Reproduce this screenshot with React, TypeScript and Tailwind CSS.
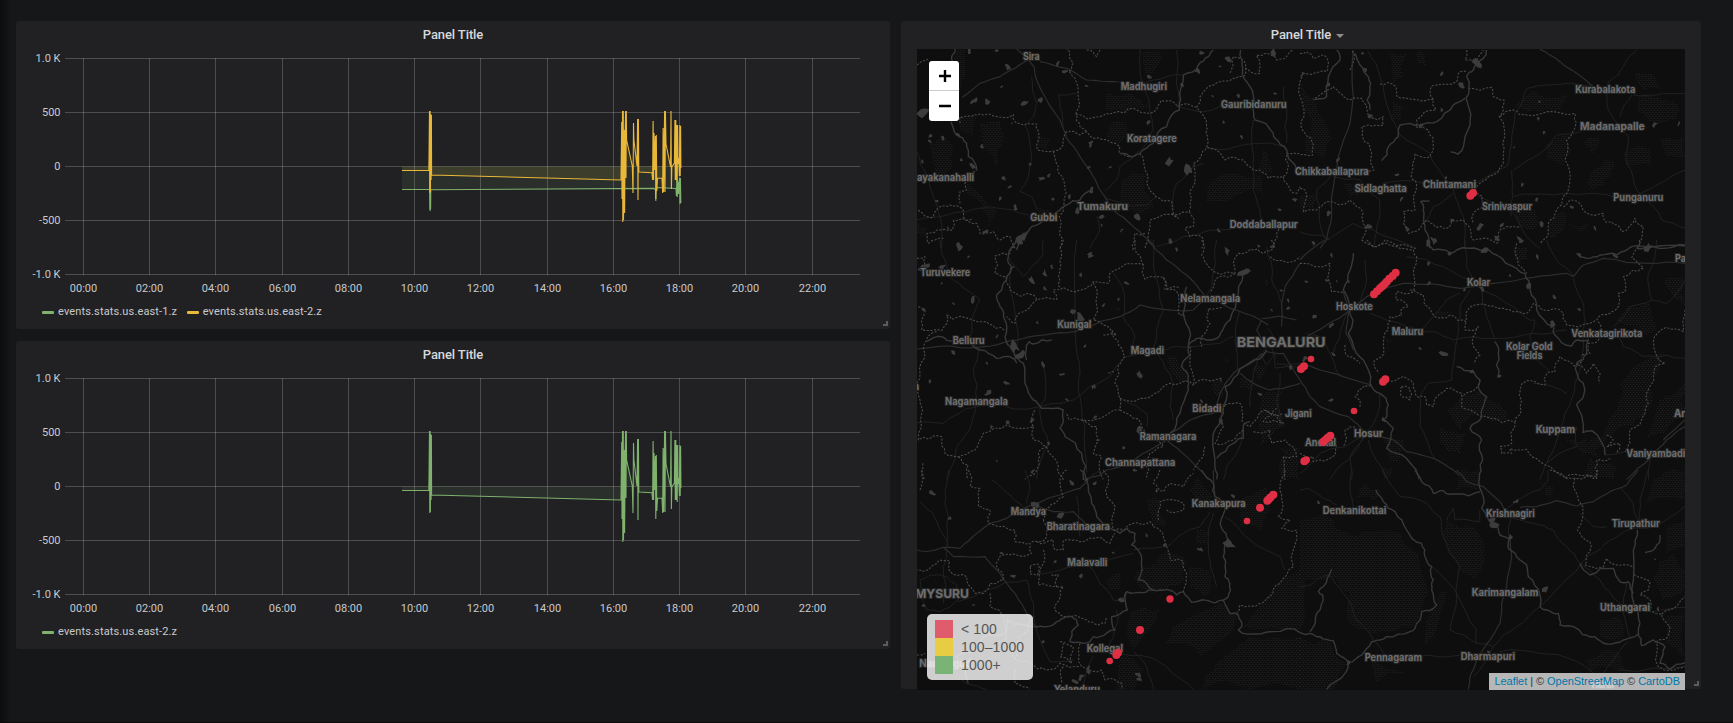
import React from "react";

/* ---------- map geometry ---------- */

type Tile = {
  dx: number;
  dy: number;
  border: string[];
  water: string[];
  major: string[];
  minor: string[];
  forest: string[];
  lakes: number[];
};

const tiles: Tile[] = [
  {
    dx: -17,
    dy: -39,
    border: [
      "51,165 60,158 75,152 84,148",
      "180,340 178,322 208,318 240,312 280,318 340,314 345,335 372,345 410,342 415,365 412,420 460,424 490,405 492,380 500,365 540,375 560,365 580,385 630,395 660,410 658,430 700,440",
      "508,185 525,205 528,310 540,350 560,365",
      "528,312 600,320 640,308 700,295 750,310 770,298 782,272 810,272 830,290 890,292 900,305 912,320 918,370 922,405 905,430 880,460 885,490 872,540 872,590 868,605 840,612 820,610 815,575 768,560 740,520 728,440 720,430",
      "890,292 900,260 920,235 960,215 1000,205 1032,198 1030,150 1000,140 990,190",
      "508,185 520,160 510,130 500,117",
      "560,120 590,140 600,120",
      "1035,175 1060,190 1080,190 1078,150 1070,135 1100,130 1130,150 1160,140 1180,120",
      "460,424 475,470 490,510 495,560 490,590 478,620 490,690 480,715",
      "922,412 950,420 975,450 1030,450 1060,480 1095,490 1105,505 1150,500 1165,470 1160,430 1200,430",
      "1150,500 1160,520 1190,550 1200,530",
      "55,600 75,618 100,620 120,590 150,585 185,595 190,620 230,640 240,670 280,665 300,690 330,680 345,715",
      "215,460 230,480 195,520 200,540 180,545 180,580",
      "215,628 160,632 158,660 110,660 80,672 85,700 130,685",
      "815,610 835,625 750,630 745,670 735,715",
      "868,605 880,650 855,655 870,680 905,680 905,715",
      "1150,640 1130,670 1120,715",
      "700,720 705,670 735,670",
    ],
    water: [
      "165,117 155,140 158,155",
      "153,335 170,375 200,400 205,440 230,480",
      "575,540 540,570 500,585 480,600 430,630 395,650 370,670 350,720",
      "940,120 925,140 895,165 850,195 842,270 838,300 800,350 760,400 720,430 700,440 680,432 660,430",
      "1022,120 1028,180 1050,230 1060,290 1065,330 1120,370 1125,385 1160,420 1185,465 1200,490",
    ],
    major: [
      "385,150 402,170 408,205 440,270 480,330 500,385 540,440 580,500 600,540 640,600 700,650 765,710",
      "187,262 240,220 300,200 345,175 385,150 350,117",
      "420,155 500,175 560,210 650,215",
    ],
    minor: [
      "650,215 720,225 800,200 845,195",
      "530,250 475,255 480,290 490,350",
      "720,117 720,180 735,240 750,300 760,360 740,400 700,440 660,470 650,510 615,545",
      "395,200 410,280 400,320 375,345 395,440 385,500 360,545 395,560 410,600",
      "51,425 80,500 100,560 120,620 125,715",
      "51,630 130,618 200,605 270,590 340,600 385,615",
      "615,565 700,590 740,585 770,560",
      "590,620 600,660 570,715",
      "770,710 850,680 930,660 1000,655",
      "830,120 830,200 835,290",
      "838,290 910,305 960,290 1080,290",
      "910,460 870,480 830,520 820,600",
      "1060,330 1055,400 1060,480 1060,540 1080,600 1090,640",
      "922,415 1000,412 1150,410",
      "1160,400 1160,300 1150,230",
    ],
    forest: [
      "170,120 195,120 195,200 180,240 160,260 155,170",
      "240,340 300,330 310,390 285,470 250,410",
      "90,400 130,380 160,470 130,500 100,460",
      "620,250 700,250 745,290 680,310 615,300",
      "725,125 780,125 760,190 735,190",
      "630,340 680,340 660,400 620,380",
      "920,540 980,490 1080,495 1085,550 1000,560 920,575",
      "665,510 740,490 760,590 720,610 660,570",
      "410,375 450,385 440,420 415,415",
      "1090,420 1110,460 1120,490 1075,480",
      "200,510 260,580 290,600 270,650 250,600 200,550",
      "180,320 230,320 220,380 180,360",
      "51,640 80,650 75,680 51,670",
      "410,590 450,600 430,640",
    ],
    lakes: [
      208, 125, 6, 290, 122, 5, 325, 172, 9, 472, 163, 7, 495, 185, 6, 560, 228, 4, 222, 272, 9, 260, 275, 10, 375, 278, 9,
      420, 270, 9, 305, 230, 4, 245, 410, 7, 128, 383, 5, 90, 378, 5, 90, 395, 5, 335, 340, 4, 572, 400, 8, 630, 472, 4,
      565, 473, 5, 808, 455, 10, 865, 480, 12, 745, 338, 6, 748, 200, 6, 845, 225, 5, 905, 130, 9, 895, 183, 9, 985, 148, 8,
      960, 170, 4, 1120, 130, 9, 938, 258, 5, 1015, 258, 5, 1125, 250, 5, 970, 338, 5, 1025, 382, 5, 390, 463, 5,
      445, 497, 7, 425, 505, 8, 310, 505, 8, 330, 530, 5, 300, 565, 6, 345, 592, 9, 68, 455, 5, 110, 573, 5, 458, 567, 5,
      508, 560, 5, 530, 605, 9, 608, 620, 7, 710, 618, 9, 605, 645, 4, 178, 708, 10, 255, 665, 6, 145, 655, 5, 665, 660, 5,
      810, 692, 7, 955, 660, 6, 1140, 600, 5, 1185, 570, 8, 70, 305, 18, 575, 540, 8, 370, 680, 15, 360, 695, 10, 218, 470, 9,
      185, 450, 5, 175, 375, 6,
    ],
  },
  {
    dx: 383,
    dy: -39,
    border: [
      "0,130 20,125 40,145 70,135 85,160 80,185 40,190 10,190 0,200",
      "10,190 12,300 15,370 40,405 38,435 0,435",
      "45,265 80,240 100,230 120,250 145,270 185,265 200,285 210,325 250,320 250,345 205,345 185,350 190,390 205,400 215,430 222,480 200,490",
      "150,180 155,120",
      "240,222 285,228 290,258 340,268 400,268 408,300 350,330 348,350 385,360 400,410 390,440 345,432 335,490 350,520 345,600 310,605 310,640 325,670 355,660 380,630 405,650 440,655 455,632 490,630 510,655 520,690 590,700 595,670 620,650 660,650",
      "400,268 390,250 395,228 470,215 475,190 500,185",
      "505,235 575,232 580,260 612,270 610,300 598,320 608,400 610,460 590,490 545,515 530,530 525,550 548,560 550,590 520,610 520,640",
      "600,320 640,300 680,315 740,305 825,310 828,335 800,390 795,450 805,540 790,560 770,600 745,640 745,670 720,700",
      "790,590 815,570 860,610 910,610 915,635 950,645 965,665 1005,625 1030,650 1015,715",
      "0,535 15,540 10,605 50,600 80,575 150,570 170,590 185,600 190,640 200,660 185,690 240,705 255,690 330,710 350,715",
      "500,120 495,150 530,150 550,120",
    ],
    water: [
      "165,130 180,165 205,200 210,240 210,300",
      "110,120 120,150 85,200 80,260 40,268",
      "560,120 550,145 520,180 500,200 498,265 510,330 495,380 490,410 475,432 452,425",
      "495,265 460,285 410,335 360,345 300,345 295,380 265,410 245,452",
      "388,572 362,575 372,610 375,660 390,715",
      "1010,715 1050,712 1155,708",
    ],
    major: [
      "160,120 160,260 150,340 115,440 105,500 95,560 92,640 80,690 60,715",
      "720,118 780,155 830,190 880,230",
    ],
    minor: [
      "1010,118 975,160 955,195 925,215 920,240",
      "1000,255 1070,255 1155,250",
      "880,230 740,225 680,235 645,310 635,400 620,470 560,500 530,520",
      "635,480 638,560 632,620",
      "205,125 240,200 270,310 300,375 390,430 430,500 460,540 490,620 495,715",
      "920,250 930,310 955,340 985,380 980,460 1010,540 1060,590 1085,630 1155,655",
      "995,255 960,320",
      "840,365 770,375 720,430 640,480",
      "640,560 760,555 850,552 940,560 1010,555 1100,510 1155,480",
      "460,550 400,590 370,640",
      "525,550 560,570 630,600 700,700 720,715",
      "100,500 180,510 240,570 230,650 220,715",
      "80,690 160,640 220,660 340,710",
      "0,665 60,675 90,690",
      "250,520 370,520",
      "100,485 50,540 60,640 80,690",
    ],
    forest: [
      "270,130 320,130 310,200 280,220",
      "350,125 380,130 375,170 355,160",
      "1000,190 1055,190 1085,240 1030,240",
      "1020,260 1080,265 1140,300 1120,330 1040,330 1010,300",
      "700,240 800,250 780,300 700,300 640,290",
      "0,210 50,290 95,390 70,450 20,430 12,300",
      "740,400 800,370 790,470 740,440",
      "870,380 900,380 880,430 850,400",
      "1080,390 1155,380 1155,440 1100,440",
      "880,480 960,450 930,500 880,540 860,520",
      "970,430 1050,420 1055,465 980,465",
      "640,600 710,600 700,660 660,650",
      "750,640 790,600 780,670 750,690",
      "280,270 310,290 300,330 275,330",
      "130,520 200,540 150,560",
      "0,560 50,560 45,600 0,600",
      "800,640 870,640 850,670",
    ],
    lakes: [
      187, 130, 4, 530, 160, 14, 485, 225, 9, 425, 190, 5, 425, 300, 5, 718, 275, 4, 715, 325, 5, 732, 367, 5, 642, 412, 4,
      1063, 343, 8, 1137, 341, 5, 438, 503, 5, 667, 525, 6, 112, 450, 6, 85, 610, 7, 205, 650, 9, 455, 630, 7, 590, 685, 8,
      605, 645, 5, 660, 688, 9, 722, 640, 8, 885, 655, 6, 815, 590, 5, 320, 655, 6, 40, 700, 6, 305, 565, 6, 290, 495, 5,
      85, 225, 8, 10, 190, 5, 710, 570, 5, 400, 690, 10, 1045, 712, 9, 540, 650, 9, 195, 178, 6, 210, 318, 6, 365, 345, 6,
    ],
  },
  {
    dx: -17,
    dy: 191,
    border: [
      "350,0 330,40 285,48 285,100 320,110 330,150 400,165 410,178 470,178 460,150 490,142 530,155 560,145 580,125 625,130 630,100 680,70 730,75 735,118 790,112 800,145 835,160 838,225 855,228",
      "478,142 478,100 485,50 485,0",
      "410,178 380,210 350,230 345,250 320,230",
      "580,128 580,240 610,255 640,290 660,320 675,350 655,375 645,430 655,460 660,510 600,535 545,540 510,540 495,520",
      "660,475 720,475 765,460 810,430 870,425 880,435 920,420 965,415 965,430",
      "790,112 795,150 840,145",
      "610,285 650,285 635,270",
      "625,400 645,395",
      "55,200 75,215 65,270 125,272 140,225 155,238 260,245 285,265 320,270",
      "51,55 75,50 75,75",
      "110,275 80,300 75,340 60,400 51,430 60,480 65,520 55,600 90,595 125,590 135,640 175,650 225,630 250,580 320,555 400,560 405,510",
      "400,560 400,600 440,620 415,640 415,680 375,718",
      "440,620 475,680 490,720",
      "545,540 575,560 590,560 580,640 605,650 610,718",
      "660,510 690,525 725,560 750,600 790,620 770,625 735,660 740,718",
      "905,0 905,45 925,80 1005,100 1015,40 1050,28 1090,40 1125,15 1110,0",
      "1005,100 960,110 935,150 930,160",
      "965,202 925,205 930,250 905,290 905,320",
      "1110,50 1180,65 1200,50",
      "865,310 870,380 880,435",
      "975,495 1020,490 1025,540 1050,560 1090,510 1150,520",
      "975,495 970,560 945,610 1000,600 1030,570",
      "1060,575 1110,570 1115,610 1155,600 1190,650 1150,650 1155,720",
      "1095,510 1150,550 1090,545 1130,505",
      "915,620 900,660 880,690",
      "68,670 75,718",
      "175,650 205,675 205,718",
      "705,0 710,40 730,75",
    ],
    water: [
      "350,0 325,50 335,85 310,130 290,165 300,200 315,240 315,290 340,330 370,370 375,430 400,480 425,505 490,510 490,540 480,565 495,590 545,640 550,720",
      "80,305 125,290 160,305 200,290 240,330 290,355 330,350 350,370",
      "380,360 388,305 400,312 455,300",
      "860,140 858,250 865,320 870,345 845,380 865,410 865,450 840,520 810,580",
      "1040,85 1015,160 990,240 965,275 950,295 890,295 865,315",
      "1100,330 1050,370 1000,415 975,440 970,520 940,580 945,660 950,718",
      "1050,545 1030,555 1030,595 1000,610 950,655",
    ],
    major: [
      "740,0 800,60 860,105 900,150 920,170 990,205 1050,225 1105,255",
      "51,327 130,318 230,322 310,308 390,290 480,278 525,275 600,245 660,230 720,195 790,208 880,210 910,180",
      "1200,70 1155,140 1145,190 1145,260",
      "550,718 600,705 620,690 690,670 740,635 800,600 810,580 870,540 940,520 960,460 1000,400 1060,360 1100,335",
      "800,600 860,650 925,718",
      "1085,240 1070,270 1085,300 1110,310",
      "1085,235 1140,228 1190,240",
      "1020,400 1060,430 1110,450 1150,445 1200,430",
      "1100,335 1150,340 1200,420",
    ],
    minor: [
      "120,0 125,40 150,110 200,150 240,180 215,240 210,300 235,325 220,390 230,480 215,550 170,620 150,690 140,718",
      "51,548 130,550 200,505 260,490 420,500 480,490 520,480 570,440 630,410 680,350 720,340",
      "530,0 525,240 525,275 530,330 540,400 540,470 555,560 560,700",
      "325,50 370,110 400,75 430,40 430,0",
      "330,85 345,220 350,320",
      "430,370 435,480 420,500 430,570 445,610 410,718",
      "760,0 760,80 790,210 770,270 760,330",
      "640,100 670,150 670,230 705,290 700,340",
      "760,325 800,330 820,320 865,320 960,310 1000,290",
      "1018,215 1012,390",
      "920,170 935,140 950,0",
      "1100,20 1115,120 1145,190",
      "1105,265 1118,290 1118,310",
      "1125,340 1125,384 1200,384",
      "1130,372 1200,372",
      "1140,400 1130,480 1140,560",
      "670,480 740,520 740,560",
      "770,340 800,390 820,430 810,500 820,540",
      "1080,340 1060,400 1050,500",
      "1110,310 1080,345 1100,375 1120,350 1110,310",
      "970,718 980,680 1010,640 1030,560",
    ],
    forest: [
      "800,350 830,350 860,390 850,430 815,400",
      "1085,460 1150,450 1155,560 1080,620 1075,560",
      "1110,600 1200,620 1200,720 1150,720 1155,640",
      "1020,410 1060,420 1055,450 1020,440",
      "935,430 965,420 970,470 940,460",
      "645,200 660,205 655,220",
      "970,355 988,355 980,370",
      "1090,115 1105,120 1100,140",
      "1060,380 1100,380 1080,430",
    ],
    lakes: [
      178, 18, 9, 70, 80, 14, 125, 82, 10, 570, 45, 9, 395, 120, 12, 435, 100, 8, 543, 103, 7, 435, 145, 5, 220, 180, 9,
      125, 130, 4, 160, 190, 5, 205, 50, 4, 455, 80, 5, 680, 130, 6, 655, 178, 4, 610, 195, 5, 520, 213, 8, 540, 232, 12,
      412, 247, 4, 345, 320, 13, 362, 345, 13, 160, 338, 6, 555, 318, 4, 430, 375, 8, 485, 403, 6, 320, 430, 7, 265, 460, 9,
      720, 403, 9, 580, 440, 7, 502, 480, 5, 90, 422, 5, 260, 370, 4, 325, 548, 8, 275, 560, 5, 395, 540, 7, 445, 612, 6,
      595, 600, 4, 670, 625, 5, 705, 690, 6, 720, 572, 13, 980, 35, 9, 830, 30, 5, 1032, 100, 13, 1075, 18, 5, 1115, 20, 7,
      1145, 152, 5, 1165, 182, 5, 1115, 210, 5, 1165, 205, 5, 1080, 462, 5, 962, 545, 8, 905, 485, 6, 585, 532, 5,
      290, 662, 3, 395, 698, 4, 1172, 385, 6, 335, 83, 7, 290, 290, 5, 70, 208, 5,
    ],
  },
  {
    dx: 383,
    dy: 191,
    border: [
      "0,70 90,70 95,155 130,155",
      "200,0 230,20 260,10 290,20 340,30 350,50 345,130 330,160 290,155 290,180 325,200 305,205 305,225 270,230 265,270 250,310 245,350 220,370 235,400",
      "330,150 370,165 375,195 405,230 450,225 500,245 495,270 535,260 520,290 540,345 520,370",
      "500,240 500,215 550,192 610,205 650,215 680,220 700,190 730,210 790,220 800,255 870,250 890,240 930,220 955,200 955,160 975,155 970,110 1000,90 1030,85 995,55 1015,20 1018,0",
      "650,10 645,40 680,100",
      "895,245 895,300 865,310 870,340 845,345",
      "1155,210 1150,275 1100,262 1060,305 1095,370 1065,380 1040,460 1035,520 1020,555 990,570 990,610 975,635",
      "845,365 830,375 860,400 880,370 900,400 898,430",
      "825,380 780,350 765,395 740,400 735,435 665,432 660,500 645,545 570,535 520,515 485,500 485,460 440,445 420,460 400,500 380,495 375,470 350,470 340,430 310,410 270,425",
      "305,440 305,470 330,480 330,445 305,440",
      "540,420 485,470",
      "645,545 635,610 600,620 605,640 635,640 630,625 680,628 720,665 760,690 800,715 890,710 890,660 930,655",
      "920,585 940,600 920,620 960,610 950,640",
      "180,500 180,480 165,470 175,450 215,435",
      "135,315 145,350 180,370",
      "165,560 135,570 130,620",
      "0,640 40,650 40,665 105,645 110,610",
    ],
    water: [
      "160,40 150,90 130,150 150,200 145,280 165,330 190,360 210,430 240,460 265,495 260,530 250,540 280,565 260,625 290,640 340,680 358,718",
      "385,0 400,30 450,40 470,30 540,30 590,45 650,85 675,100 690,150 710,210 760,260 765,285 815,318 835,300 865,300 860,340 830,370 850,430 850,470 830,495 848,545 848,578 875,572 915,645",
      "830,40 860,55 900,45 950,45 980,30 1040,20 1090,25 1155,15",
      "470,380 520,395 540,420 535,440 560,470 545,510 545,530 510,565 545,600 548,660 535,718",
      "585,305 595,340 595,410",
    ],
    major: [
      "0,300 80,255 150,210 200,170 250,145 310,130 400,132 480,145 520,140 580,130 700,112 800,100 820,110 850,75 910,55 1050,70 1155,70",
      "0,420 30,470 60,500 145,530 200,580 280,600 320,635 400,655 460,690 490,718",
      "1155,560 1100,600 1050,655 980,718",
      "1155,540 1090,600",
      "0,60 75,0",
      "0,370 60,390 130,410 215,435",
      "130,155 148,210 138,280 160,330",
    ],
    minor: [
      "820,115 850,190 855,250 850,330 825,430 795,520 770,600 740,670 720,718",
      "820,110 770,60 740,0",
      "520,130 500,80 495,0",
      "320,50 430,80 510,120",
      "545,150 560,230 585,300",
      "480,160 440,180 400,230 340,285",
      "510,150 480,200 470,300 455,420 385,430 360,470 360,560 380,600 405,655",
      "330,260 400,275 460,300 580,295 700,280 800,270",
      "545,150 640,200 690,240 705,240 690,290 700,350 745,390",
      "940,260 990,200 1055,180 1100,190 1155,120",
      "1055,180 1045,100 1070,0",
      "940,270 970,320 1030,350 1100,345 1155,355",
      "120,410 100,360 80,320 60,290 20,280",
      "210,220 320,260",
      "170,210 200,120 195,60",
      "240,460 230,530 205,570",
      "195,590 150,650 155,718",
      "190,590 90,718",
      "205,600 260,718",
      "200,585 60,640 0,700",
      "740,670 830,620 830,560",
      "800,460 760,440 700,430",
      "915,645 1000,630",
      "1045,718 1050,655",
      "100,340 130,250 150,210",
    ],
    forest: [
      "1090,120 1155,115 1155,200 1120,170",
      "980,200 1050,190 1070,270 1040,290 950,240",
      "1000,380 1090,340 1050,440 1030,530 960,560 880,630 850,620 930,530 960,430",
      "440,510 540,450 600,490 620,540 540,520 480,570",
      "1080,480 1155,430 1155,530 1090,580 1040,600",
      "640,20 680,20 680,60 645,60",
      "250,590 310,600 300,660 270,660",
      "800,600 860,590 900,650 850,640",
      "255,290 275,300 265,320",
      "420,560 500,580 480,640 420,610",
      "870,650 950,680 940,718 850,718",
      "250,680 280,690 270,710 250,710",
      "400,210 450,215 470,230 420,235",
    ],
    lakes: [
      385, 10, 8, 450, 40, 6, 558, 32, 10, 387, 130, 6, 385, 72, 6, 545, 145, 8, 630, 107, 5, 710, 50, 6, 763, 170, 5,
      837, 208, 5, 945, 48, 8, 1045, 25, 10, 758, 255, 10, 685, 140, 8, 95, 45, 5, 20, 125, 4, 80, 122, 4, 110, 123, 3,
      145, 125, 4, 45, 228, 6, 95, 255, 8, 360, 325, 4, 430, 342, 9, 100, 342, 6, 92, 480, 6, 250, 540, 8, 595, 410, 6,
      515, 395, 7, 15, 355, 9, 665, 5, 8, 495, 150, 5, 838, 45, 5,
    ],
  },
  {
    dx: -17,
    dy: 421,
    border: [
      "65,0 60,60",
      "205,0 210,50 240,55 235,110 270,120 265,160 300,170 345,180 345,215 390,220 395,250 340,252 305,255 290,290 310,330 270,340 250,370 225,370 205,345 200,320 150,305 150,275 120,270 100,285 85,300 51,300",
      "395,215 440,200 430,150",
      "410,215 460,210 465,240 490,240 490,212 540,215 580,205 630,220 645,190",
      "390,290 415,282 412,315 390,312 390,290",
      "430,240 430,280 415,345 470,350 475,315 450,315",
      "470,350 490,350 480,380 465,420 490,440 560,450 595,465 615,460 620,440",
      "500,0 480,30 490,80 470,95 440,115 430,150",
      "610,0 625,40 620,80 645,110 640,180 700,160 750,155 760,170",
      "780,0 760,40 790,65 810,40 850,50 880,10",
      "760,170 790,200 800,230 810,270 850,275 860,310 850,365",
      "775,150 780,95 850,100 850,120 800,120",
      "1155,0 1140,50 1145,90 1135,140 1170,150 1145,175 1190,180 1180,290 1140,340 1110,380 1080,400 1020,405 1010,430",
      "270,370 270,410 310,440",
      "310,450 340,560 390,580 440,600 480,580 540,590",
      "480,515 520,530 515,580 480,560 490,520",
      "345,600 345,640 390,655",
      "51,555 75,550",
      "540,520 545,590 605,600 615,630 665,640 665,658",
      "490,590 485,640",
      "400,440 350,520 350,560",
    ],
    water: [
      "540,0 560,30 575,100 590,140 640,180 660,190 680,175 705,190 705,215 695,225 715,240 725,265 715,330 760,360",
      "670,390 680,365 730,368 760,360 800,358 830,375 850,365 875,397 940,398 970,390 990,430 1015,435 1025,470 1015,480 1070,492 1120,485 1200,488",
      "680,365 682,420 635,440 645,480 600,500 580,500 570,515 550,520 510,515 515,485 535,465 530,450 500,440 470,455 440,470 400,470",
      "905,0 940,40 945,80 975,120 965,175 985,210 970,260 975,320 990,340 985,380 970,390",
      "400,470 370,465 320,450 315,490 250,500 230,540 170,560 205,640",
    ],
    major: [
      "51,240 80,245 130,232 180,235 230,190 270,160 320,145 370,115 410,100 480,75 540,55 560,35",
      "130,232 160,260 255,260 300,310 345,370 370,410 405,470",
      "410,105 460,125 520,125 560,165",
      "940,0 945,80",
    ],
    minor: [
      "145,0 135,60 145,140 140,230 130,290 130,400",
      "60,330 90,315 140,320 170,345 175,390 120,425 80,420 62,380 60,330",
      "175,395 260,360 380,330",
      "410,315 480,300 560,290 700,250",
      "570,290 600,340 640,390 670,395",
      "700,240 810,225 850,190 900,170 930,125",
      "375,0 390,60 380,100",
      "60,95 100,130 120,180 145,230",
      "275,30 330,75 370,110",
      "560,35 600,0",
      "380,330 400,400 405,460 450,575 520,570",
      "660,550 740,560 800,590 880,658",
      "620,540 640,500 655,440 650,420",
      "580,560 560,600 545,658",
      "930,270 950,350",
      "975,140 1050,210 1140,260 1155,300",
      "930,270 925,200 940,130",
      "700,545 740,590 760,658",
      "540,200 530,80",
      "170,620 200,640 260,658",
    ],
    forest: [
      "620,330 660,310 660,360 625,355",
      "700,320 780,255 850,260 855,330 800,355 720,355",
      "870,60 900,20 940,80 900,100",
      "1020,90 1100,50 1110,120 1080,180 1020,170",
      "740,90 780,90 800,170 760,170",
      "890,180 930,180 920,220 890,220",
      "690,430 780,420 700,540 680,480",
      "660,560 730,600 700,658 650,658",
      "820,470 960,400 1010,440 900,560 800,520",
      "1050,500 1200,500 1200,658 900,658 950,580",
      "1100,380 1200,300 1200,480 1030,470",
      "865,290 930,300 920,380 870,350",
    ],
    lakes: [
      515, 38, 9, 585, 40, 6, 100, 72, 10, 398, 5, 6, 150, 145, 5, 480, 138, 10, 340, 318, 6, 545, 318, 8, 640, 248, 4,
      465, 275, 4, 770, 62, 5, 740, 197, 5, 797, 225, 6, 900, 238, 7, 990, 220, 15, 1000, 80, 7, 565, 598, 10, 545, 620, 9,
      525, 635, 8, 715, 615, 8, 717, 628, 7, 430, 515, 4, 305, 250, 5, 220, 405, 4, 400, 105, 12, 70, 405, 6, 560, 30, 6,
      665, 390, 7,
    ],
  },
  {
    dx: 383,
    dy: 421,
    border: [
      "750,0 795,25 860,15 890,25 895,0",
      "825,25 820,50 835,90 832,180 870,215 870,245 855,285 880,292 910,290 918,265 1000,290 1010,320 1050,335 1045,360 1020,375 1045,385 1050,425 1085,432 1110,470 1100,505 1070,515 1075,590 1110,600 1155,590",
      "1085,432 1120,415 1155,380",
    ],
    water: [
      "228,60 250,95 285,125 320,180 365,220 375,260 395,290 400,330 395,360 410,405 365,425 345,475 330,485 260,500 240,510 215,515 185,555 145,578 110,550 100,512 60,500 30,490 0,488",
      "145,578 135,610 80,658",
      "95,298 70,350 55,365 68,375 50,430 30,485",
      "345,0 365,35 400,70 430,62 470,72 540,65",
      "545,0 538,50 545,115 580,160 600,195 630,205 625,235 660,270 680,285 685,320 720,375 720,410 740,420 775,430 780,465 830,475 850,495 885,500 920,522 970,510 1015,492",
      "840,280 870,315 940,295 960,335 985,335 1000,370",
      "1080,195 1065,235 1035,248",
      "1012,180 1000,240 1000,330 1015,430 1015,490 1025,527 1060,510 1095,530 1080,580 1110,598 1155,578",
    ],
    major: [
      "630,200 635,260 620,350 605,400 600,460 570,510 530,570 510,620 505,658",
      "660,112 710,110 770,92 830,108 880,95 930,65 980,45 1015,0",
      "470,0 500,35 550,50 600,95 615,120",
    ],
    minor: [
      "615,120 640,100 720,60 745,30 745,0",
      "635,130 625,170 628,230",
      "640,145 700,160 760,180 800,230 840,280 900,330 960,400 985,420",
      "905,235 840,285 780,350 720,410 650,470 580,530 520,620",
      "905,230 1000,175 1060,170 1155,110",
      "1015,160 1000,100 960,50",
      "1045,0 1020,90 1015,170",
      "0,60 20,55 70,85 110,105",
      "155,0 150,60 160,110",
      "245,0 300,80 380,100 420,140 430,200 480,290 470,380 450,480 530,520 580,530",
      "395,290 470,370 530,480 530,520",
      "0,350 30,345 85,315 130,370 170,450 220,510 260,560",
      "360,558 480,555",
      "600,545 720,550 820,570 880,610",
      "985,515 940,570 910,610",
      "960,600 1155,590",
      "1060,425 1155,412",
      "440,150 460,115 465,150 540,155 540,120",
      "990,500 970,430 980,340",
      "840,130 880,170 920,170",
    ],
    forest: [
      "0,150 100,150 160,200 300,190 360,280 370,400 340,470 220,490 140,440 150,370 90,320 0,340",
      "480,0 540,0 530,60 470,60",
      "440,150 520,170 550,250 520,330 480,300 430,200",
      "1060,30 1155,10 1155,90 1040,100",
      "1100,170 1155,150 1155,230 1100,250",
      "0,500 90,510 140,580 100,658 0,658",
      "900,450 960,440 970,500 900,500",
      "420,370 440,360 400,500 360,540 390,430",
      "860,570 960,550 980,610 870,605",
      "1060,320 1120,250 1155,300 1155,350 1090,390",
      "1100,440 1155,430 1155,560 1100,520",
      "735,45 760,50 750,85 735,75",
      "190,40 240,60 220,90 170,80",
      "210,560 320,610 230,640",
    ],
    lakes: [575, 150, 12, 583, 168, 12, 648, 95, 6, 633, 200, 6, 735, 358, 9, 55, 97, 5, 1065, 268, 3, 1075, 415, 6, 565, 545, 4, 145, 578, 6],
  },
];

type Label = [tile: number, text: string, x0: number, x1: number, baseline: number, size?: number];

const labels: Label[] = [
  [0, "Sira", 369, 419, 150],
  [0, "Madhugiri", 662, 801, 241],
  [0, "Gauribidanuru", 963, 1160, 295],
  [0, "Koratagere", 681, 830, 397],
  [0, "ayakanahalli", 51, 222, 514],
  [0, "Tumakuru", 531, 684, 600, 31],
  [0, "Gubbi", 391, 472, 634],
  [0, "Doddaballapur", 989, 1193, 653],
  [1, "Kurabalakota", 826, 1006, 249],
  [1, "Madanapalle", 840, 1034, 359, 31],
  [1, "Chikkaballapura", -15, 206, 494],
  [1, "Sidlaghatta", 164, 320, 546],
  [1, "Chintamani", 369, 528, 534],
  [1, "Srinivaspur", 546, 696, 601],
  [1, "Punganuru", 940, 1090, 574],
  [2, "Turuvekere", 61, 210, 108],
  [2, "Nelamangala", 841, 1021, 185],
  [2, "Kunigal", 472, 574, 265],
  [2, "Belluru", 158, 254, 312],
  [2, "Magadi", 692, 792, 341],
  [2, "BENGALURU", 1010, 1277, 320, 41],
  [2, "Nagamangala", 135, 324, 494],
  [2, "Bidadi", 877, 964, 517],
  [2, "Jigani", 1155, 1235, 532],
  [2, "Ramanagara", 719, 889, 600],
  [2, "Channapattana", 615, 826, 679],
  [2, "a", 42, 57, 450],
  [3, "Kolar", 501, 571, 137],
  [3, "Hoskote", 108, 218, 209],
  [3, "Maluru", 275, 370, 284],
  [3, "Venkatagirikota", 814, 1027, 290],
  [3, "Kolar Gold", 618, 758, 329],
  [3, "Fields", 650, 727, 356],
  [3, "Pa", 1125, 1158, 66],
  [3, "Ar", 1122, 1156, 530, 31],
  [3, "Kuppam", 707, 825, 578],
  [3, "Hosur", 162, 249, 590, 31],
  [3, "Anekal", 15, 108, 617],
  [3, "Vaniyambadi", 979, 1156, 651],
  [4, "Mandya", 332, 438, 135],
  [4, "Bharatinagara", 440, 630, 179],
  [4, "Malavalli", 502, 622, 288],
  [4, "MYSURU", 45, 207, 384, 37],
  [4, "Kanakapura", 875, 1037, 111],
  [4, "Kollegal", 560, 669, 546],
  [4, "Yelanduru", 462, 600, 669],
  [4, "Nanjangud", 58, 215, 591],
  [5, "Denkanikottai", 68, 259, 131],
  [5, "Krishnagiri", 558, 704, 141],
  [5, "Tirupathur", 935, 1079, 172],
  [5, "Karimangalam", 515, 715, 377],
  [5, "Uthangarai", 900, 1050, 424],
  [5, "Dharmapuri", 482, 645, 571],
  [5, "Pennagaram", 194, 366, 573],
  [5, "Harur", 875, 945, 655],
];

const markers: [tile: number, x: number, y: number, r: number][] = [
  [1, 511, 557, 12], [1, 519, 549, 12],
  [3, 222, 163, 12], [3, 231, 154, 12], [3, 240, 145, 12], [3, 247, 139, 12], [3, 254, 132, 12], [3, 260, 125, 12], [3, 268, 116, 12], [3, 278, 108, 12], [3, 287, 98, 12],
  [3, 33, 357, 10], [3, 12, 379, 12], [3, 3, 387, 12],
  [3, 249, 425, 12], [3, 256, 418, 12],
  [3, 162, 513, 10],
  [3, 69, 606, 12], [3, 76, 600, 12], [3, 83, 593, 12], [3, 91, 587, 12],
  [3, 13, 664, 12], [3, 19, 660, 11],
  [4, 1120, 74, 12], [4, 1112, 82, 12], [4, 1107, 87, 12], [4, 1102, 92, 12],
  [4, 1080, 113, 12], [4, 1041, 153, 10],
  [4, 810, 387, 11], [4, 720, 480, 12],
  [4, 654, 548, 12], [4, 649, 555, 12], [4, 629, 573, 10],
];

const noise = (a: number, b: number) => {
  const v = Math.sin(a * 12.9898 + b * 78.233) * 43758.5453;
  return v - Math.floor(v) - 0.5;
};

/* Splits each segment and nudges the new points sideways for a natural course. */
function meander(points: string, amount: number): string {
  let pts = points.split(" ").map((p) => p.split(",").map(Number));
  for (let pass = 0; pass < 2; pass++) {
    const next = [pts[0]];
    for (let i = 1; i < pts.length; i++) {
      const [x0, y0] = pts[i - 1];
      const [x1, y1] = pts[i];
      const n = noise(x0 + x1, y0 - y1) * amount;
      if (Math.hypot(x1 - x0, y1 - y0) > 12) {
        next.push([(x0 + x1) / 2 - (y1 - y0) * n, (y0 + y1) / 2 + (x1 - x0) * n]);
      }
      next.push(pts[i]);
    }
    pts = next;
  }
  return pts.map(([x, y]) => `${x.toFixed(1)},${y.toFixed(1)}`).join(" ");
}

function lakeShape(x: number, y: number, r: number): string {
  const out: string[] = [];
  const tilt = noise(x, y) * 6;
  for (let i = 0; i < 8; i++) {
    const a = (i / 8) * Math.PI * 2;
    const k = r * (1.05 + noise(x + i, y + r) * 1.2);
    const px = Math.cos(a) * k * 1.15;
    const py = Math.sin(a) * k * 0.7;
    out.push(
      `${(x + px * Math.cos(tilt) - py * Math.sin(tilt)).toFixed(1)},${(y + px * Math.sin(tilt) + py * Math.cos(tilt)).toFixed(1)}`,
    );
  }
  return out.join(" ");
}

function MapTile({ tile }: { tile: Tile }) {
  const lakes: string[] = [];
  for (let i = 0; i < tile.lakes.length; i += 3) {
    lakes.push(lakeShape(tile.lakes[i], tile.lakes[i + 1], tile.lakes[i + 2]));
  }
  return (
    <g transform={`translate(${tile.dx} ${tile.dy}) scale(0.33333)`} fill="none" strokeLinejoin="round">
      {tile.forest.map((p) => (
        <polygon key={p} points={meander(p, 0.4)} fill="url(#forest)" />
      ))}
      {tile.minor.map((p) => (
        <polyline key={p} points={meander(p, 0.15)} stroke="#212121" strokeWidth={3} />
      ))}
      {tile.major.map((p) => (
        <polyline key={p} points={meander(p, 0.08)} stroke="#2d2d2d" strokeWidth={3.6} />
      ))}
      {tile.border.map((p) => (
        <polyline key={p} points={meander(p, 0.35)} stroke="#4a4a4a" strokeWidth={3.3} strokeDasharray="6.5 4.5" />
      ))}
      {tile.water.map((p) => (
        <polyline key={p} points={meander(p, 0.3)} stroke="#383838" strokeWidth={4.2} />
      ))}
      {lakes.map((p) => (
        <polygon key={p} points={p} fill="#3c3c3c" />
      ))}
    </g>
  );
}

function MapCanvas() {
  return (
    <svg className="block" width={768} height={641} viewBox="0 0 768 641">
      <defs>
        <pattern id="forest" width={9} height={12} patternUnits="userSpaceOnUse">
          <rect width={9} height={12} fill="#0f0f0f" />
          <rect x={0} y={0} width={3} height={3} fill="#222222" />
          <rect x={4.5} y={6} width={3} height={3} fill="#222222" />
        </pattern>
      </defs>
      <rect width={768} height={641} fill="#0e0e0e" />
      {tiles.map((t, i) => (
        <MapTile key={i} tile={t} />
      ))}
      <g fontFamily='Inter, "Open Sans", sans-serif' fontWeight={700}>
        {labels.map(([t, text, x0, x1, y, size = 29]) => (
          <text
            key={text}
            x={tiles[t].dx + x0 / 3}
            y={tiles[t].dy + y / 3}
            fontSize={size / 3}
            textLength={(x1 - x0) / 3}
            lengthAdjust="spacingAndGlyphs"
            fill="#6e6e6e"
            stroke="#242424"
            strokeWidth={2.2}
            strokeLinejoin="round"
            paintOrder="stroke"
          >
            {text}
          </text>
        ))}
      </g>
      <g fill="#e02f44">
        {markers.map(([t, x, y, r]) => (
          <circle key={`${x}-${y}`} cx={tiles[t].dx + x / 3} cy={tiles[t].dy + y / 3} r={r / 3} />
        ))}
      </g>
    </svg>
  );
}

/* ---------- charts ---------- */

const GREEN = "#7eb26d";
const YELLOW = "#eab839";

const east1 =
  "402,189.5 429.6,189.5 429.8,210 430,166 430.2,211 430.4,166 430.6,209 430.8,189.7 654,188.4 655.5,190 655.8,201 656.2,187.5 676,188.5 676.4,196 676.8,180 677.2,197 677.8,182 678.5,194 679,183 679.6,178 680,204 680.4,178 680.8,203";
const east2 =
  "402,170.5 428.8,170.5 429,160 429.5,111 429.8,193 430.1,111 430.4,192 430.7,114 431.1,180 431.4,115 431.6,175 621,180 621.7,122 622,199 622.5,111 622.8,222 623.3,111 623.5,220 624.2,130 624.6,213 625.2,130 625.6,111 626,178 626.3,111 626.6,140 632.3,166 633,193 633.5,123 633.9,140 637,166 637.6,119 638,200 638.4,119 638.8,172 652,172.7 652.6,180 653.1,121 653.6,180 654,133 654.6,170 655.4,136 655.8,199 656.3,135 656.8,191 657.5,178.3 662,178.3 662.7,193 663.1,128 663.6,192 664.6,111 665,192 665.4,111 666,144 670.6,167 671,111 671.4,189 671.8,167 674.4,163 674.9,120 675.3,180 675.8,120 676.3,180 676.8,125 677.2,182 677.6,125 678.1,164 678.8,158 679.4,176 679.8,125 680.2,176 680.6,126 680.9,168";

const yTicks: [number, string][] = [
  [58, "1.0 K"],
  [112, "500"],
  [166, "0"],
  [220, "-500"],
  [274, "-1.0 K"],
];
const xTicks: [number, string][] = [
  [83, "00:00"], [149, "02:00"], [215, "04:00"], [282, "06:00"], [348, "08:00"], [414, "10:00"],
  [480, "12:00"], [547, "14:00"], [613, "16:00"], [679, "18:00"], [745, "20:00"], [812, "22:00"],
];

type Series = { name: string; color: string; points: string };

function Chart({ series }: { series: Series[] }) {
  return (
    <svg className="block" width={874} height={251} viewBox="16 49 874 251">
      <g fill="#ffffff" fillOpacity={0.2}>
        {yTicks.map(([y]) => (
          <rect key={y} x={65} y={y} width={795} height={1} />
        ))}
        {xTicks.map(([x]) => (
          <rect key={x} x={x} y={58} width={1} height={217} />
        ))}
      </g>
      {series.map((s) => (
        <g key={s.name}>
          <polygon points={`402,166.5 ${s.points} 681,166.5`} fill={s.color} fillOpacity={0.1} />
          <polyline points={s.points} fill="none" stroke={s.color} strokeWidth={1.1} strokeLinejoin="bevel" />
        </g>
      ))}
      <g fontFamily="Roboto, sans-serif" fontSize={11} fill="#c8c9cb">
        {yTicks.map(([y, t]) => (
          <text key={t} x={60.5} y={y + 4} textAnchor="end">
            {t}
          </text>
        ))}
        {xTicks.map(([x, t]) => (
          <text key={t} x={x + 0.5} y={292} textAnchor="middle">
            {t}
          </text>
        ))}
      </g>
    </svg>
  );
}

function Panel({ className, menu, children }: { className: string; menu?: boolean; children: React.ReactNode }) {
  return (
    <section className={`relative flex flex-col rounded-[3px] bg-[#212124] ${className}`}>
      <header className="flex h-7 shrink-0 items-center justify-center gap-[5px] text-[13px] font-medium tracking-[-0.1px] text-[#d8d9da]">
        {menu && <span className="w-2" />}
        <span>Panel Title</span>
        {menu && (
          <svg width={8} height={4} viewBox="0 0 8 4" className="mt-0.5">
            <path d="M0 0h8L4 4z" fill="#8e8e8e" />
          </svg>
        )}
      </header>
      {children}
      <span className="absolute right-[2px] bottom-[3px] size-[5px] border-r-2 border-b-2 border-[#5c5c5f]" />
    </section>
  );
}

function GraphPanel({ series }: { series: Series[] }) {
  return (
    <Panel className="h-[308px]">
      <Chart series={series} />
      <ul className="flex h-6 items-center gap-[9.5px] pl-[26px] text-[11px] tracking-[0.14px] text-[#c8c9cb]">
        {series.map((s) => (
          <li key={s.name} className="flex items-center gap-1">
            <span className="h-[3px] w-3 rounded-[1px]" style={{ background: s.color }} />
            <span>{s.name}</span>
          </li>
        ))}
      </ul>
    </Panel>
  );
}

const ranges = [
  { label: "< 100", swatch: "bg-[#de5c6c]" },
  { label: "100–1000", swatch: "bg-[#e8cd44]" },
  { label: "1000+", swatch: "bg-[#7ab376]" },
];

function MapPanel() {
  return (
    <Panel className="h-[668px] w-[800px]" menu>
      <div className="relative mx-4 h-[641px] w-[768px] shrink-0 overflow-hidden font-['Liberation_Sans',sans-serif]">
        <MapCanvas />
        <div className="absolute top-3 left-3 flex w-[30px] flex-col overflow-hidden rounded-[3px] bg-white">
          <button className="flex h-[30px] items-center justify-center border-b border-[#ccc]" aria-label="Zoom in">
            <svg width={12} height={12} viewBox="0 0 12 12" className="ml-px">
              <path d="M6 0v12M0 6h12" stroke="#000" strokeWidth={2.4} />
            </svg>
          </button>
          <button className="flex h-[30px] items-center justify-center" aria-label="Zoom out">
            <svg width={12} height={12} viewBox="0 0 12 12" className="ml-px">
              <path d="M0 6h12" stroke="#000" strokeWidth={2.4} />
            </svg>
          </button>
        </div>
        <div className="absolute bottom-[10px] left-[10px] w-[106px] rounded-[5px] bg-white/80 px-2 py-1.5 text-[14px] leading-[18px] tracking-[0.12px] text-[#555]">
          {ranges.map((r) => (
            <div key={r.label} className="flex items-center gap-2">
              <span className={`size-[18px] ${r.swatch}`} />
              <span>{r.label}</span>
            </div>
          ))}
        </div>
        <div className="absolute right-0 bottom-0 h-[17px] bg-white/70 px-[5px] text-[11px] leading-[17px] tracking-[-0.05px] whitespace-nowrap text-[#333]">
          <a className="text-[#0078a8]">Leaflet</a> | © <a className="text-[#0078a8]">OpenStreetMap</a> ©{" "}
          <a className="text-[#0078a8]">CartoDB</a>
        </div>
      </div>
    </Panel>
  );
}

export default function App() {
  return (
    <main className="relative h-[723px] w-full overflow-hidden border-b border-[#0c0a0b] bg-[#161719] pt-[21px] pl-4 font-[Roboto,sans-serif]">
      <div className="absolute inset-y-0 left-0 w-3 bg-linear-to-r from-black/45 to-transparent" />
      <div className="flex items-start gap-[11px]">
        <div className="flex w-[874px] flex-col gap-3">
          <GraphPanel
            series={[
              { name: "events.stats.us.east-1.z", color: GREEN, points: east1 },
              { name: "events.stats.us.east-2.z", color: YELLOW, points: east2 },
            ]}
          />
          <GraphPanel series={[{ name: "events.stats.us.east-2.z", color: GREEN, points: east2 }]} />
        </div>
        <MapPanel />
      </div>
    </main>
  );
}
